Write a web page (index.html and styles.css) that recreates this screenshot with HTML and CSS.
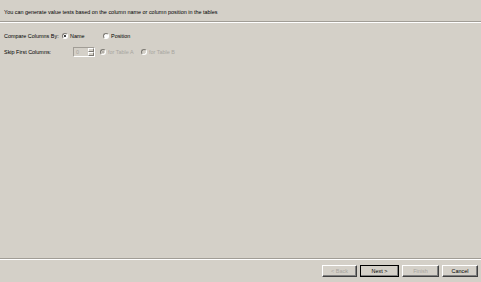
FILE: index.html
```html
<html>
	<head>
		<title>Value Tests</title>
		<meta charset="UTF-8">
		<link rel="stylesheet" href="styles.css">
	</head>
	<body>
		<div class="wizard">
			<div class="header">You can generate value tests based on the column name or column position in the tables</div>

			<div class="content">
				<div class="row">
					<span class="namecol">Compare Columns By:</span>
					<label class="opt"><span class="radio checked"></span>Name</label>
					<label class="opt pos"><span class="radio"></span>Position</label>
				</div>
				<div class="row skip">
					<span class="namecol">Skip First Columns:</span>
					<span class="spinner">
						<span class="spin_val">0</span>
						<span class="spin_btns"><span class="up"></span><span class="down"></span></span>
					</span>
					<label class="opt disabled"><span class="radio checked"></span>for Table A</label>
					<label class="opt disabled"><span class="radio"></span>for Table B</label>
				</div>
			</div>

			<div class="footer">
				<span class="btn disabled">&lt; Back</span>
				<span class="btn default">Next &gt;</span>
				<span class="btn disabled finish">Finish</span>
				<span class="btn cancel">Cancel</span>
			</div>
		</div>
	</body>
</html>
```

FILE: styles.css
```css
body {
	margin: 0px;
	padding: 0px;
	overflow: hidden;
	background-color: #d4d0c8;
	font-family: "Liberation Sans", Arial, sans-serif;
	font-size: 5.45px;
	color: #000;
}

.wizard {
	display: flex;
	flex-direction: column;
	height: 282px;
}

.header {
	height: 21px;
	padding-left: 4px;
	line-height: 24px;
	white-space: nowrap;
	border-bottom: 1px solid #a19d96;
	box-shadow: 0 1px 0 #fff;
}

.content {
	flex: 1;
	padding: 9px 4px 0 4px;
}

.row {
	display: flex;
	align-items: center;
	height: 10px;
	white-space: nowrap;
}
.row.skip {
	margin-top: 5px;
	height: 11px;
}

.namecol {
	width: 58px;
	flex-shrink: 0;
}

.opt {
	display: flex;
	align-items: center;
	gap: 2px;
	width: 41px;
	flex-shrink: 0;
}
.opt.pos {
	width: auto;
}
.disabled {
	color: #a8a59f;
}

.radio {
	border-radius: 50%;
	border: 1px solid #7b7872;
	border-right-color: #fff;
	border-bottom-color: #fff;
	background: #fff;
	display: flex;
	align-items: center;
	justify-content: center;
	box-sizing: border-box;
	width: 6px;
	height: 6px;
}
.radio.checked::after {
	content: "";
	width: 2px;
	height: 2px;
	border-radius: 50%;
	background: #000;
}
.disabled .radio {
	background: #d4d0c8;
}
.disabled .radio.checked::after {
	background: #a8a59f;
}

.spinner {
	display: flex;
	width: 22px;
	height: 10px;
	margin-left: 11px;
	margin-right: 5px;
	border: 1px solid #a19d96;
	border-right-color: #fff;
	border-bottom-color: #fff;
	box-sizing: border-box;
	background: #d4d0c8;
	flex-shrink: 0;
}
.spin_val {
	flex: 1;
	color: #a8a59f;
	padding-left: 2px;
	line-height: 8px;
}
.spin_btns {
	display: flex;
	flex-direction: column;
	width: 6px;
}
.spin_btns span {
	flex: 1;
	border: 1px solid #fff;
	border-right-color: #7b7872;
	border-bottom-color: #7b7872;
}

.footer {
	height: 23px;
	border-top: 1px solid #a19d96;
	box-shadow: inset 0 1px 0 #fff;
	display: flex;
	justify-content: flex-end;
	align-items: center;
	gap: 3px;
	padding-right: 3px;
}

.btn {
	width: 35px;
	height: 12px;
	box-sizing: border-box;
	border: 1px solid #fff;
	border-right-color: #404040;
	border-bottom-color: #404040;
	box-shadow: inset -1px -1px 0 #808080;
	display: flex;
	align-items: center;
	justify-content: center;
}
.btn.default {
	width: 39px;
	outline: 1px solid #000;
	outline-offset: -1px;
}
.btn.finish {
	width: 37px;
}
.btn.cancel {
	width: 36px;
}
```
